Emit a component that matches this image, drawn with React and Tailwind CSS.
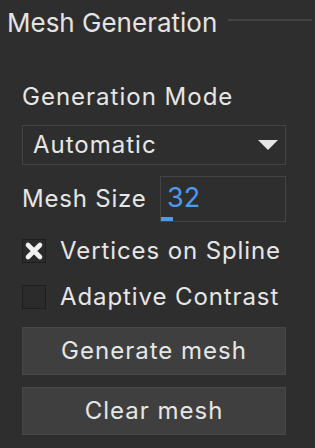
import { useState } from "react";

const font = { fontFamily: "Inter, 'Noto Sans', sans-serif" };

function Check({ checked, label, onToggle }) {
  return (
    <button type="button" onClick={onToggle} className="flex items-center h-[24px] text-left">
      <span className="w-[24px] h-[24px] border border-[#1e1e1e] bg-[#2b2b2b] flex items-center justify-center">
        {checked && (
          <svg width="20" height="20" viewBox="0 0 20 20">
            <path d="M4 4 L16 16 M16 4 L4 16" stroke="#f2f2f2" strokeWidth="4.6" strokeLinecap="round" />
          </svg>
        )}
      </span>
      <span className="ml-[14px] text-[24px] tracking-[0.9px] text-[#e6e6e6] leading-none">{label}</span>
    </button>
  );
}

export default function App() {
  const [vertices, setVertices] = useState(true);
  const [adaptive, setAdaptive] = useState(false);

  return (
    <div className="w-[315px] h-[448px] bg-[#2e2e2e] overflow-hidden" style={font}>
      <div className="flex items-center pl-[7px] h-[46px]">
        <span className="text-[26px] leading-none text-[#e4e4e4]">Mesh Generation</span>
        <div className="ml-[11px] flex-1 h-[2px] bg-[#434343] mr-[3px] mb-[6px]"></div>
      </div>

      <div className="pl-[22px] pr-[29px] flex flex-col">
        <div className="mt-[36px] h-[30px] flex items-center text-[24px] tracking-[1px] leading-none text-[#e6e6e6]">
          Generation Mode
        </div>

        <div className="mt-[13px] h-[40px] border border-[#444] flex items-center justify-between pl-[10px] pr-[7px]">
          <span className="text-[24px] tracking-[1px] leading-none text-[#e6e6e6]">Automatic</span>
          <svg width="20" height="10" viewBox="0 0 20 10">
            <path d="M0 0 H20 L10 10 Z" fill="#e6e6e6" />
          </svg>
        </div>

        <div className="mt-[11px] flex items-center h-[46px]">
          <span className="w-[138px] text-[24px] tracking-[0.8px] leading-none text-[#e6e6e6]">Mesh Size</span>
          <div className="relative flex-1 h-[46px] border border-[#444] flex items-center pl-[6px]">
            <span className="text-[27px] leading-none text-[#4a9cf2] -mt-[4px]">32</span>
            <span className="absolute left-0 bottom-0 w-[12px] h-[4px] bg-[#4a9cf2]"></span>
          </div>
        </div>

        <div className="mt-[17px] flex flex-col gap-[22px]">
          <Check checked={vertices} label="Vertices on Spline" onToggle={() => setVertices(!vertices)} />
          <Check checked={adaptive} label="Adaptive Contrast" onToggle={() => setAdaptive(!adaptive)} />
        </div>

        <div className="mt-[18px] flex flex-col gap-[12px]">
          <button type="button" className="h-[48px] bg-[#3f3f3f] border border-[#474747] text-[24px] tracking-[1px] text-[#e6e6e6]">
            Generate mesh
          </button>
          <button type="button" className="h-[48px] bg-[#3f3f3f] border border-[#474747] text-[24px] tracking-[1px] text-[#e6e6e6]">
            Clear mesh
          </button>
        </div>
      </div>
    </div>
  );
}
